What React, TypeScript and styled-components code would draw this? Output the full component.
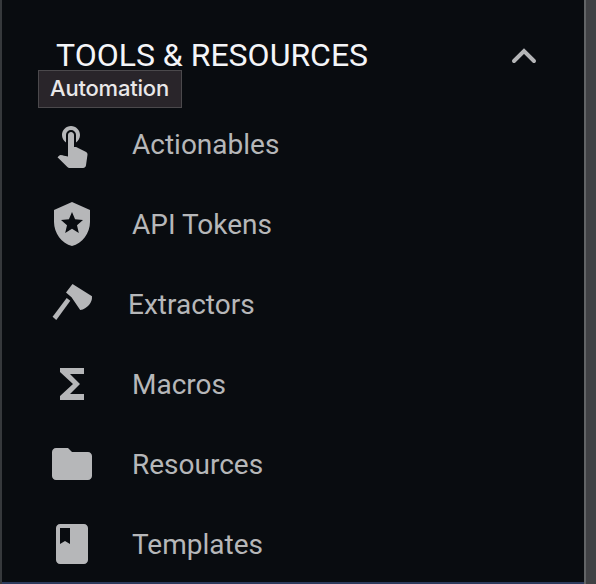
import React from 'react';
import styled, { createGlobalStyle } from 'styled-components';
import { MdTouchApp, MdLocalPolice, MdFunctions, MdFolder, MdClass } from 'react-icons/md';

const Global = createGlobalStyle`
  * { box-sizing: border-box; }
  body { margin: 0; background: #090c10; font-family: Roboto, sans-serif; overflow: hidden; }
`;
const Page = styled.div`
  display: flex; width: 596px; height: 584px;
`;
const Sidebar = styled.nav`
  position: relative; flex: 1;
  box-shadow: inset 2px 0 #36393c, inset 0 -2px #2d3b5d;
  padding-left: 2px;
  background: #090c10;
`;
const Gutter = styled.div`
  width: 12px; border-left: 2px solid #626466; background: #404144;
`;
const Header = styled.button`
  display: flex; align-items: center; justify-content: space-between;
  width: 100%; height: 104px; padding: 6px 36px 0 54px;
  border: 0; background: none; color: #f4f5f8; font: 400 32px/40px Roboto, sans-serif;
`;
const Title = styled.span`white-space: nowrap;`;
const Chevron = styled.svg`width: 48px; height: 48px; color: #b5b6b8;`;
const Tooltip = styled.div`
  position: absolute; left: 38px; top: 70px; width: 144px; height: 38px;
  display: flex; align-items: center; justify-content: center; padding: 0 1px 2px 0;
  background: #29252a; border: 1px solid #4b494c; color: #e9e8e9;
  font: 500 22px/30px Inter, sans-serif; letter-spacing: -0.2px;
`;
const List = styled.ul`list-style: none; margin: 0; padding: 0;`;
const Item = styled.li<{ $gap: number }>`
  display: flex; align-items: center; gap: ${p => p.$gap}px; height: 80px; padding-left: 46px;
  color: #b6b7b9; font-size: 28px;
  svg { width: 48px; height: 48px; flex: none; }
`;

const Hammer = () => (
  <svg viewBox="0 0 48 48" fill="currentColor">
    <path d="M24.5 4L44 16.2Q44.3 21 41 24.9Q37.5 29 32.2 30L23.5 17.2L18 12.6Z" />
    <path d="M18.7 18L22.3 20.7L8.3 40L4.6 36.8Z" />
  </svg>
);
const items = [
  { label: 'Actionables', icon: <MdTouchApp />, gap: 36 },
  { label: 'API Tokens', icon: <MdLocalPolice />, gap: 36 },
  { label: 'Extractors', icon: <Hammer />, gap: 32 },
  { label: 'Macros', icon: <MdFunctions />, gap: 36 },
  { label: 'Resources', icon: <MdFolder />, gap: 36 },
  { label: 'Templates', icon: <MdClass />, gap: 36 },
];

export default function App() {
  return (
    <>
      <Global />
      <Page>
        <Sidebar>
          <Header>
            <Title>TOOLS &amp; RESOURCES</Title>
            <Chevron viewBox="0 0 48 48" fill="none" stroke="currentColor" strokeWidth="4" strokeLinecap="round">
              <path d="M14 30L24 20L34 30" />
            </Chevron>
          </Header>
          <Tooltip role="tooltip">Automation</Tooltip>
          <List>
            {items.map(i => <Item key={i.label} $gap={i.gap}>{i.icon}<span>{i.label}</span></Item>)}
          </List>
        </Sidebar>
        <Gutter />
      </Page>
    </>
  );
}
